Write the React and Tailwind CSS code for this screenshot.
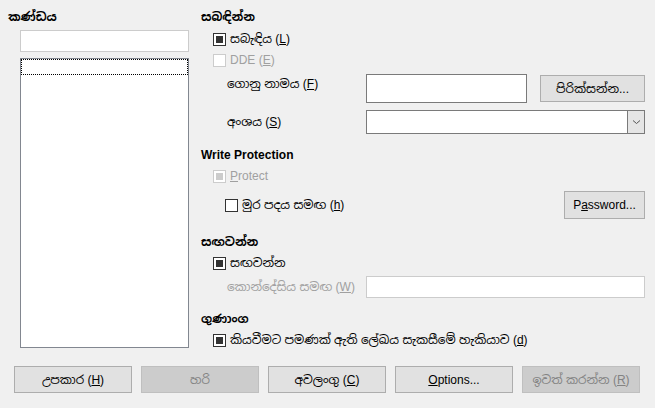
import React from 'react';

const font = { fontFamily: '"Liberation Sans", "Noto Sans Sinhala", "Noto Sans", sans-serif' };

const Check = ({ checked, disabled }) => (
    <span
        className={`flex items-center justify-center w-[13px] h-[13px] shrink-0 border bg-white ${disabled ? 'border-[#cccccc]' : 'border-[#333333]'}`}
    >
        {checked && <span className={`block w-[7px] h-[7px] ${disabled ? 'bg-[#cccccc]' : 'bg-[#333333]'}`} />}
    </span>
);

const CheckRow = ({ checked, disabled, children, className = '' }) => (
    <div className={`flex items-center h-[20px] gap-[4px] ${className}`}>
        <Check checked={checked} disabled={disabled} />
        <span className={`text-[12px] leading-[16px] ${disabled ? 'text-[#a0a0a0]' : 'text-black'}`}>{children}</span>
    </div>
);

const Heading = ({ children, className = '' }) => (
    <div className={`flex items-center h-[20px] text-[12px] font-bold text-black ${className}`}>{children}</div>
);

const Button = ({ children, disabled, className = '' }) => (
    <button
        className={`flex items-center justify-center h-[27px] border text-[12px] ${disabled ? 'bg-[#cccccc] border-[#bfbfbf] text-[#838383]' : 'bg-[#e1e1e1] border-[#adadad] text-black'} ${className}`}
    >
        {children}
    </button>
);

const App = () => {
    return (
        <div className="w-[655px] h-[408px] bg-[#f0f0f0] overflow-hidden" style={font}>
            <div className="flex h-[366px]">
                {/* Section list */}
                <div className="w-[201px] shrink-0 flex flex-col">
                    <Heading className="mt-[7px] pl-[8px]">කණ්ඩය</Heading>
                    <div className="ml-[20px] mt-[3px] w-[169px] h-[22px] bg-white border border-[#cccccc]" />
                    <div className="ml-[20px] mt-[6px] w-[169px] h-[290px] bg-white border border-[#828790] p-[0px]">
                        <div className="h-[16px] border border-dotted border-black" />
                    </div>
                </div>

                {/* Options */}
                <div className="w-[444px] shrink-0 flex flex-col">
                    <Heading className="mt-[7px]">සබඳින්න</Heading>
                    <CheckRow checked className="ml-[12px] mt-[2px]">
                        සබැඳිය (<u>L</u>)
                    </CheckRow>
                    <CheckRow disabled className="ml-[12px] mt-[1px]">
                        DDE (<u>E</u>)
                    </CheckRow>

                    <div className="flex items-start h-[29px] mt-[4px] pl-[26px]">
                        <span className="w-[139px] pt-[2px] text-[12px] leading-[16px]">
                            ගොනු නාමය (<u>F</u>)
                        </span>
                        <div className="w-[161px] h-[29px] bg-white border border-[#7a7a7a]" />
                        <Button className="ml-[13px] mt-[1px] w-[105px] h-[27px]">පිරික්සන්න...</Button>
                    </div>

                    <div className="flex items-center h-[24px] mt-[7px] pl-[26px]">
                        <span className="w-[139px] text-[12px] leading-[16px]">
                            අංශය (<u>S</u>)
                        </span>
                        <div className="flex w-[280px] h-[24px] bg-white border border-[#7a7a7a]">
                            <div className="flex-1" />
                            <div className="w-[17px] h-full bg-[#e5e5e5] border-l border-[#7a7a7a] flex items-center justify-center">
                                <svg width="9" height="6" viewBox="0 0 9 6">
                                    <path d="M1 1.5 L4.5 4.5 L8 1.5" fill="none" stroke="#555" strokeWidth="1" />
                                </svg>
                            </div>
                        </div>
                    </div>

                    <Heading className="mt-[11px]">Write Protection</Heading>
                    <CheckRow checked disabled className="ml-[12px] mt-[1px]">
                        <u>P</u>rotect
                    </CheckRow>

                    <div className="flex items-center h-[28px] mt-[5px]">
                        <CheckRow className="ml-[24px]">
                            මුර පදය සමඟ (<u>h</u>)
                        </CheckRow>
                        <Button className="ml-auto w-[81px] h-[28px]">
                            P<u>a</u>ssword...
                        </Button>
                    </div>

                    <Heading className="mt-[13px]">සඟවන්න</Heading>
                    <CheckRow checked className="ml-[12px] mt-[1px]">
                        සඟවන්න
                    </CheckRow>

                    <div className="flex items-center h-[22px] mt-[3px] pl-[26px]">
                        <span className="w-[139px] text-[12px] leading-[16px] text-[#a0a0a0]">
                            කොන්දේසිය සමඟ (<u>W</u>)
                        </span>
                        <div className="w-[280px] h-[22px] bg-white border border-[#cccccc]" />
                    </div>

                    <Heading className="mt-[11px]">ගුණාංග</Heading>
                    <CheckRow checked className="ml-[12px] mt-[1px]">
                        කියවීමට පමණක් ඇති ලේඛය සැකසීමේ හැකියාව (<u>d</u>)
                    </CheckRow>
                </div>
            </div>

            {/* Dialog buttons */}
            <div className="flex gap-[9px] pl-[14px]">
                <Button className="w-[118px]">උපකාර (<u>H</u>)</Button>
                <Button disabled className="w-[118px]">හරි</Button>
                <Button className="w-[118px]">අවලංගු (<u>C</u>)</Button>
                <Button className="w-[118px]"><u>O</u>ptions...</Button>
                <Button disabled className="w-[118px]">ඉවත් කරන්න (<u>R</u>)</Button>
            </div>
        </div>
    );
};

export default App;
